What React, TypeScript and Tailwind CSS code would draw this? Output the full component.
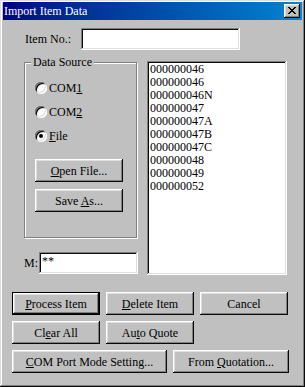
import React from "react";

const raised =
  "shadow-[inset_-1px_-1px_#0a0a0a,inset_1px_1px_#ffffff,inset_-2px_-2px_#808080,inset_2px_2px_#dfdfdf]";
const sunken =
  "shadow-[inset_-1px_-1px_#ffffff,inset_1px_1px_#808080,inset_-2px_-2px_#dfdfdf,inset_2px_2px_#0a0a0a]";

function Btn({
  children,
  w,
  isDefault,
}: {
  children: React.ReactNode;
  w: string;
  isDefault?: boolean;
}) {
  if (isDefault) {
    return (
      <div className={`${w} h-[23px] border border-black flex`}>
        <div
          className={`flex-1 flex items-center justify-center bg-[#c0c0c0] ${raised} text-[12px] leading-none`}
        >
          {children}
        </div>
      </div>
    );
  }
  return (
    <div
      className={`${w} h-[23px] flex items-center justify-center bg-[#c0c0c0] ${raised} text-[12px] leading-none`}
    >
      {children}
    </div>
  );
}

function Radio({ label, checked }: { label: React.ReactNode; checked?: boolean }) {
  return (
    <div className="h-[24px] flex items-center">
      <div
        className={`w-[12px] h-[12px] rounded-full bg-white ${sunken} flex items-center justify-center`}
      >
        {checked && <div className="w-[4px] h-[4px] rounded-full bg-black" />}
      </div>
      <span className="ml-[2px] text-[12px] leading-none">{label}</span>
    </div>
  );
}

function CloseX() {
  const rows = [
    "XX....XX",
    ".XX..XX.",
    "..XXXX..",
    "...XX...",
    "..XXXX..",
    ".XX..XX.",
    "XX....XX",
  ];
  return (
    <svg width="8" height="7" viewBox="0 0 8 7" shapeRendering="crispEdges">
      {rows.flatMap((r, y) =>
        r.split("").map((c, x) =>
          c === "X" ? <rect key={`${x}-${y}`} x={x} y={y} width="1" height="1" fill="#000" /> : null
        )
      )}
    </svg>
  );
}

export default function App() {
  const items = [
    "000000046",
    "000000046",
    "000000046N",
    "000000047",
    "000000047A",
    "000000047B",
    "000000047C",
    "000000048",
    "000000049",
    "000000052",
  ];
  return (
    <div
      className={`w-[305px] h-[387px] bg-[#c0c0c0] shadow-[inset_-1px_-1px_#0a0a0a,inset_1px_1px_#dfdfdf,inset_-2px_-2px_#808080,inset_2px_2px_#ffffff] px-[3px] pt-[2px] font-['Liberation_Serif',serif] text-black overflow-hidden`}
    >
      {/* Title bar */}
      <div className="h-[18px] flex items-center justify-between bg-gradient-to-r from-[#000080] to-[#1084d0] pl-[1px] pr-[2px]">
        <span className="text-white text-[12px] leading-none">Import Item Data</span>
        <div
          className={`w-[16px] h-[14px] bg-[#c0c0c0] ${raised} flex items-center justify-center pb-[1px]`}
        >
          <CloseX />
        </div>
      </div>

      {/* Item No row */}
      <div className="mt-[8px] flex items-center pl-[22px]">
        <span className="w-[56px] text-[12px] leading-none">Item No.:</span>
        <div className={`w-[159px] h-[22px] bg-white ${sunken}`} />
      </div>

      {/* Middle */}
      <div className="mt-[11px] flex pl-[21px]">
        <div className="w-[114px] flex flex-col">
          <div className="relative mt-[1px] w-[113px] h-[176px] border border-[#808080] shadow-[inset_1px_1px_#ffffff,1px_1px_0_#ffffff] pl-[10px] pt-[13px]">
            <span className="absolute left-[6px] top-[-8px] px-[2px] bg-[#c0c0c0] text-[12px] leading-[14px]">
              Data Source
            </span>
            <Radio
              label={
                <>
                  COM<u>1</u>
                </>
              }
            />
            <Radio
              label={
                <>
                  COM<u>2</u>
                </>
              }
            />
            <Radio
              checked
              label={
                <>
                  <u>F</u>ile
                </>
              }
            />
            <div className="mt-[11px] flex flex-col gap-[7px]">
              <Btn w="w-[88px]">
                <span>
                  <u>O</u>pen File...
                </span>
              </Btn>
              <Btn w="w-[88px]">
                <span>
                  Save <u>A</u>s...
                </span>
              </Btn>
            </div>
          </div>
          <div className="mt-[14px] flex items-center">
            <span className="w-[15px] text-[12px] leading-none">M:</span>
            <div className={`w-[99px] h-[22px] bg-white ${sunken} pl-[3px] pt-[3px] text-[12px] leading-none`}>
              **
            </div>
          </div>
        </div>
        <div className={`ml-[9px] w-[140px] h-[214px] bg-white ${sunken} pt-[2px] pl-[2px]`}>
          {items.map((it, i) => (
            <div key={i} className="h-[13px] text-[12px] leading-[13px] pl-[1px]">
              {it}
            </div>
          ))}
        </div>
      </div>

      {/* Buttons */}
      <div className="mt-[17px] pl-[9px] flex flex-col gap-[6px]">
        <div className="flex gap-[6px]">
          <Btn w="w-[88px]" isDefault>
            <span>
              <u>P</u>rocess Item
            </span>
          </Btn>
          <Btn w="w-[88px]">
            <span>
              <u>D</u>elete Item
            </span>
          </Btn>
          <Btn w="w-[88px]">
            <span>Cancel</span>
          </Btn>
        </div>
        <div className="flex gap-[6px]">
          <Btn w="w-[88px]">
            <span>
              Cl<u>e</u>ar All
            </span>
          </Btn>
          <Btn w="w-[88px]">
            <span>
              Au<u>t</u>o Quote
            </span>
          </Btn>
        </div>
        <div className="flex gap-[6px]">
          <Btn w="w-[155px]">
            <span>
              <u>C</u>OM Port Mode Setting...
            </span>
          </Btn>
          <Btn w="w-[116px]">
            <span>
              From <u>Q</u>uotation...
            </span>
          </Btn>
        </div>
      </div>
    </div>
  );
}
